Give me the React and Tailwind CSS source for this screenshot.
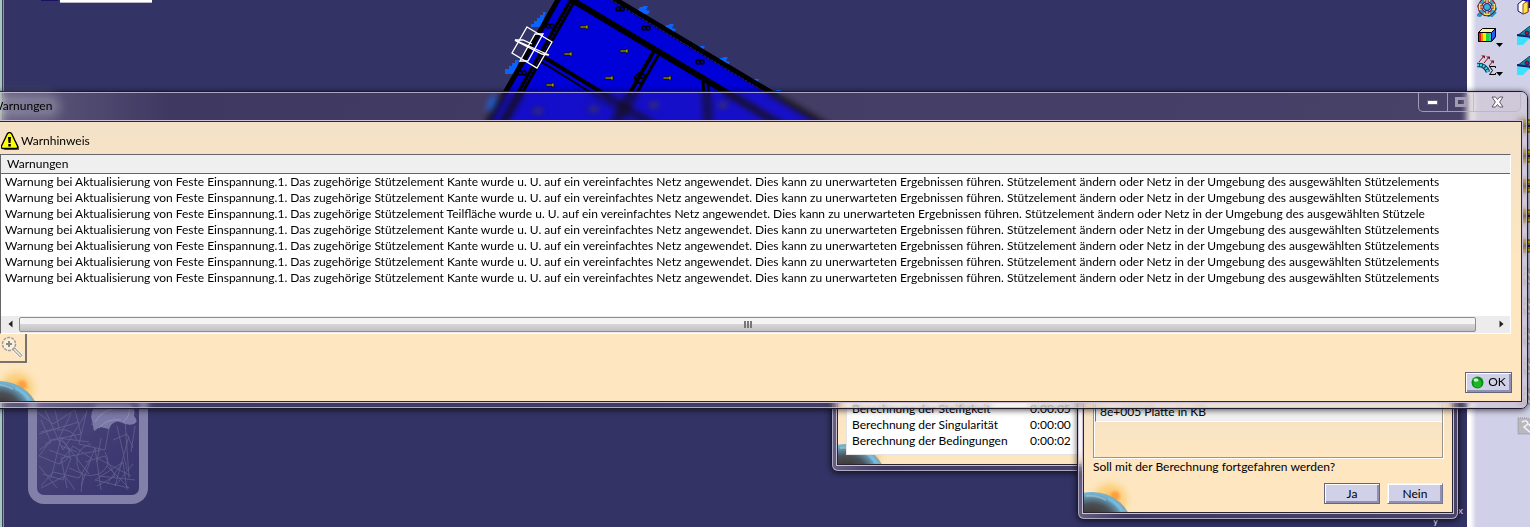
const warningFor = (element, ending) =>
  `Warnung bei Aktualisierung von Feste Einspannung.1. Das zugehörige Stützelement ${element} wurde u. U. auf ein vereinfachtes Netz angewendet. Dies kann zu unerwarteten Ergebnissen führen. Stützelement ändern oder Netz in der Umgebung des ausgewählten ${ending}`;

const warnings = [
  warningFor("Kante", "Stützelements"),
  warningFor("Kante", "Stützelements"),
  warningFor("Teilfläche", "Stützele"),
  warningFor("Kante", "Stützelements"),
  warningFor("Kante", "Stützelements"),
  warningFor("Kante", "Stützelements"),
  warningFor("Kante", "Stützelements"),
];

const steps = [
  { name: "Berechnung der Steifigkeit", time: "0:00:05" },
  { name: "Berechnung der Singularität", time: "0:00:00" },
  { name: "Berechnung der Bedingungen", time: "0:00:02" },
];

const bolts = [[584, 27], [568, 54], [624, 51], [609, 78], [550, 85], [667, 78], [537, 111], [593, 109], [653, 105], [722, 105]];
const holes = [[550, 26], [522, 73], [620, 9], [646, 28], [700, 62]];
const clamps = [[637, 11], [663, 29], [694, 51], [717, 62], [748, 84], [770, 95]];

function Model() {
  return (
    <svg className="absolute left-0 top-0" width="900" height="128" viewBox="0 0 900 128" aria-hidden="true">
      {/* fixtures along the left edge */}
      <g fill="#0a63ff">
        <path d="M546 12h-3v3h-3v3h-3v3h-3v3h-3v3h10z" />
        <path d="M519 60h-4v3h-3v3h-3v3h-4v5h10z" />
        <path d="M497 95h-4v4h-4v5l-3 6h8z" />
      </g>
      {clamps.map(([x, y]) => (
        <path key={x} d={`M${x} ${y}l3-4h3v-1h5l-2 4 4 1-2 3-7 1z`} fill="#0a63ff" />
      ))}
      <path d="M558 0H612L825 128H487Z" fill="#0000d8" />
      <g stroke="#000" fill="none">
        <path d="M559 -2L485 128" strokeWidth="5" />
        <path d="M574 -2L500 128" strokeWidth="7" />
        <path d="M573 0L499 130" stroke="#0c0c90" strokeWidth="1" strokeDasharray="3 1" />
        <path d="M572 0L786 128" strokeWidth="6" />
        <path d="M612 -2L830 128" strokeWidth="6" />
        <path d="M611 0L820 125" stroke="#2020a0" strokeWidth="1" strokeDasharray="3 1" />
        <path d="M542 56L660 128" strokeWidth="4" />
        <path d="M540 61L648 128" strokeWidth="2" />
        <path d="M654 51L612 124" strokeWidth="4" />
        <path d="M659 54L618 126" strokeWidth="3" />
        <path d="M703 81l3 45M708 84l3 40" strokeWidth="3" />
        <circle cx="640" cy="78" r="5" strokeWidth="2" />
        <path d="M634 78h12" strokeWidth="2" />
      </g>
      {holes.map(([x, y]) => (
        <g key={x} fill="#0000a0" stroke="#000" strokeWidth="1.5">
          <circle cx={x - 2} cy={y} r="2" />
          <circle cx={x + 2} cy={y} r="2" />
        </g>
      ))}
      {bolts.map(([x, y]) => (
        <path key={x} d={`M${x - 4} ${y - 1}h6v-1h2v4h-2v-1h-6z`} fill="#a09c00" stroke="#101000" strokeWidth="0.8" />
      ))}
      {/* compass plane */}
      <g stroke="#fff" strokeWidth="1.3" fill="none">
        <path d="M527 27L552 42L537 68L512 53Z" />
        <path d="M515 40L549 55L542 54L516 41Z" />
        <path d="M535 34h8L528 61h-8Z" />
        <path d="M515 40l8 0 9 4" />
      </g>
    </svg>
  );
}

function Planet({ className }) {
  return (
    <svg className={className} width="52" height="40" viewBox="0 0 52 40" aria-hidden="true">
      <defs>
        <radialGradient id="glow" cx="26" cy="28" r="25" gradientUnits="userSpaceOnUse">
          <stop offset="0" stopColor="#fbb84a" />
          <stop offset="0.55" stopColor="#fbcf7c" stopOpacity="0.8" />
          <stop offset="1" stopColor="#fde6c0" stopOpacity="0" />
        </radialGradient>
        <radialGradient id="sun" cx="31" cy="24" r="7" gradientUnits="userSpaceOnUse">
          <stop offset="0.4" stopColor="#ffa040" />
          <stop offset="1" stopColor="#ffb050" stopOpacity="0" />
        </radialGradient>
        <radialGradient id="globe" cx="8" cy="56" r="38" gradientUnits="userSpaceOnUse">
          <stop offset="0.45" stopColor="#423e3e" />
          <stop offset="0.64" stopColor="#4a5258" />
          <stop offset="0.78" stopColor="#5c8298" />
          <stop offset="0.9" stopColor="#6fb4d4" />
          <stop offset="1" stopColor="#86a8b0" />
        </radialGradient>
      </defs>
      <rect width="52" height="40" fill="url(#glow)" />
      <circle cx="31" cy="24" r="7" fill="url(#sun)" />
      <ellipse cx="8" cy="56" rx="40" ry="36" fill="url(#globe)" />
      <path d="M2 24q10-1 20 4" stroke="#c4dce4" strokeWidth="2" opacity="0.4" fill="none" />
      <path d="M24 27q10 5 14 12" stroke="#7cc8ec" strokeWidth="3" opacity="0.5" fill="none" />
    </svg>
  );
}

function GlassWindow({ className, title, controls, children }) {
  return (
    <section className={`absolute rounded-[7px] border border-[#1d1a30] shadow-[0_1px_6px_rgba(0,0,0,0.7)] backdrop-blur-[3px] ${className}`}>
      <div className="rounded-md border border-[#c8c0d8]/80 bg-[rgba(190,110,60,0.09)] bg-linear-to-r from-white/20 via-transparent via-12% to-white/5 px-[3px] pb-1">
        <header className="flex h-[27px] items-start justify-between">
          {title}
          {controls}
        </header>
        <div className="border border-[#c8c0d8]">
          <div className="relative overflow-hidden border border-[#2a2630] bg-linear-to-b from-[#f3e1c8] to-[#fde6c0] to-50%">
            {children}
          </div>
        </div>
      </div>
    </section>
  );
}

function WindowControls() {
  return (
    <div className="mr-[2px] flex h-[19px] rounded-b-[5px] border border-t-0 border-[#b9b2c9]/80">
      <button aria-label="Minimieren" className="flex w-[29px] items-center justify-center border-r border-[#b9b2c9]/80">
        <svg width="12" height="6" viewBox="0 0 12 6"><rect x="0.5" y="1.5" width="10" height="4" fill="#fff" stroke="#66607c" /></svg>
      </button>
      <button aria-label="Maximieren" className="flex w-[26px] items-center justify-center border-r border-[#b9b2c9]/80">
        <svg width="12" height="10" viewBox="0 0 12 10"><path d="M1.5 1.5h9v7h-9z" fill="none" stroke="#a39bb2" strokeWidth="3" /></svg>
      </button>
      <button aria-label="Schließen" className="flex w-[46px] items-center justify-center">
        <svg width="13" height="12" viewBox="0 0 13 12">
          <path d="M1 1h3.500l2 2.500 2-2.500H12L8.600 6 12 11H8.500l-2-2.500-2 2.500H1L4.400 6z" fill="#fff" stroke="#5e5868" />
        </svg>
      </button>
    </div>
  );
}

function PushButton({ children, strong }) {
  const edge = strong ? "border-[#66667a]" : "border-[#f2f2ff] border-b-[#77779a] border-r-[#77779a]";
  return (
    <button className={`h-[21px] w-14 border bg-[#d0d0e8] leading-4 shadow-[inset_1px_1px_0_#fff,inset_-2px_-2px_0_#9090b0] ${edge}`}>
      {children}
    </button>
  );
}

function ToolIcon({ kind }) {
  if (kind === "wheel")
    return (
      <svg width="20" height="20" viewBox="0 0 20 20">
        <path d="M0 19l5-5M2 20l5-5M14 20l5-5M11 20l9-9M0 10l9-9" stroke="#1495c4" strokeWidth="2" />
        <circle cx="10" cy="10" r="7" fill="#c8ecf4" stroke="#8b1010" strokeWidth="4.500" />
        <circle cx="10" cy="10" r="7" fill="none" stroke="#2fa8d0" strokeWidth="2.600" />
        <circle cx="10" cy="10" r="7" fill="none" stroke="#f8e468" strokeWidth="2.600" strokeDasharray="6 5" strokeDashoffset="3" />
        <path d="M10 3v14M3 10h14" stroke="#8b1010" strokeWidth="3" />
        <path d="M10 3v14M3 10h14" stroke="#fff" strokeWidth="1.200" />
        <circle cx="10" cy="10" r="3.500" fill="#35b5dc" stroke="#102080" />
      </svg>
    );
  if (kind === "spectrum")
    return (
      <svg width="20" height="20" viewBox="0 0 20 20">
        <path d="M1.500 6.500l4-4h13v8l-4 5z" fill="#fff3a0" stroke="#000" />
        <path d="M14.500 6.500l4-4v8l-4 5z" fill="#2c5ce8" stroke="#000" />
        <rect x="1" y="6" width="3" height="10" fill="#e81010" />
        <rect x="4" y="6" width="2" height="10" fill="#ff8a00" />
        <rect x="6" y="6" width="3" height="10" fill="#ffee00" />
        <rect x="9" y="6" width="3" height="10" fill="#20d040" />
        <rect x="12" y="6" width="3" height="10" fill="#20c8e8" />
        <path d="M1.500 6.500h13v9h-13z" fill="none" stroke="#000" />
      </svg>
    );
  if (kind === "forces")
    return (
      <svg width="20" height="20" viewBox="0 0 20 20">
        <path d="M0 10q8-1 11 7" fill="none" stroke="#063c60" strokeWidth="4.500" />
        <path d="M0 10q8-1 11 7" fill="none" stroke="#3fd4e4" strokeWidth="2.500" strokeDasharray="2 1" />
        <path d="M2 7l5-6M7 8l5-6M12 11l4-5" fill="none" stroke="#8b1010" strokeWidth="1" />
        <path d="M4 0.500h4v3zM9 1.500h4v3zM13 5.500h4v3z" fill="#8b1010" />
        <path d="M18.500 13v-1.500h-6l3 4-3 4h6V18" fill="none" stroke="#000" strokeWidth="1" />
      </svg>
    );
  if (kind === "box")
    return (
      <svg width="20" height="20" viewBox="0 0 20 20">
        <rect x="5" y="0" width="15" height="12" fill="#0000e0" />
        <path d="M1 8l5-4 5 2v10l-5 2-5-3z" fill="#fff" stroke="#101060" />
        <path d="M6 8l5-3v11l-5 2z" fill="#ffe14a" stroke="#a05a00" />
      </svg>
    );
  if (kind === "surface")
    return (
      <svg width="20" height="20" viewBox="0 0 20 20">
        <path d="M0 10L13 0h7v14z" fill="#0d8f9f" stroke="#0a3a60" />
        <path d="M0 10v9h6l8-8z" fill="#3fe0fb" />
        <path d="M0 9l14 2" stroke="#181870" strokeWidth="2" />
        <circle cx="10" cy="7" r="2" fill="#c01010" stroke="#102080" />
      </svg>
    );
  if (kind === "load")
    return (
      <svg width="20" height="20" viewBox="0 0 20 20">
        <path d="M2 4h18v4H2zM4 12h16v4H4z" fill="#d8b800" stroke="#4a3a00" />
        <path d="M2 10h16" stroke="#202080" strokeWidth="2" />
      </svg>
    );
  return (
    <svg width="20" height="20" viewBox="0 0 20 20">
      <path d="M1 2h10l4 4v12H1z" fill="#b8b8be" stroke="#8c8c94" strokeDasharray="1 1" />
      <path d="M5 6q5-3 6 2l-4 3 7 6M12 8l3 5" stroke="#f4f4fa" strokeWidth="1.500" fill="none" />
    </svg>
  );
}

const leftTools = [
  { kind: "wheel", name: "Eigenschaften" },
  { kind: "spectrum", name: "Spannungen" },
  { kind: "forces", name: "Kräfte" },
];
const rightTools = ["box", "surface", "surface", "blank", "load", "load", "load", "load", "load", "grey", "grey", "grey", "grey", "grey", "grey"];

function Toolbar() {
  return (
    <aside className="relative h-screen w-[63px] shrink-0 overflow-hidden bg-linear-to-r from-white from-5% to-[#d0d0e8] to-15% pl-[10px]">
      <div className="-mt-1 flex gap-5">
        <div className="flex w-5 shrink-0 flex-col gap-2">
          {leftTools.map((tool, i) => (
            <button key={tool.kind} aria-label={tool.name} className="relative block h-[21px]">
              <ToolIcon kind={tool.kind} />
              {i > 0 && (
                <svg className="absolute left-[19px] top-[18px]" width="8" height="5" viewBox="0 0 8 5">
                  <path d="M0 0h7L3.500 4z" fill="#000" />
                </svg>
              )}
            </button>
          ))}
        </div>
        <div className="flex w-5 shrink-0 flex-col gap-[10px]">
          {rightTools.map((kind, i) => (
            <div key={i} className="h-5">{kind !== "blank" && <ToolIcon kind={kind} />}</div>
          ))}
        </div>
      </div>
    </aside>
  );
}

function Sketch() {
  return (
    <div className="absolute left-7 top-[390px] h-[114px] w-[120px] overflow-hidden rounded-b-2xl border-9 border-t-0 border-[#8280a8] bg-linear-to-br from-[#4f4b7e] to-[#37336c]">
      <svg width="102" height="105" viewBox="0 0 102 105" aria-hidden="true">
        <g fill="none" stroke="#8280aa" strokeWidth="0.8" opacity="0.55">
          <path d="M0 22l16 12 22-14 6 24-30 6L2 66l20 8 14-18 18 12-12 20-26-6-12 14M8 20l18 40 24-38M50 20l-8 34 26 6 4-22-18-4" />
          <path d="M2 44l40-12M14 88l10-40 28 36M30 98l-6-30 40-8M44 96l14-38 6 42M54 54q-16 4-14 20t22 10q14-8 6-22" />
          <path d="M88 30l4 58M92 46l-14 50 18-22M70 76l22 22-34-8 28-18M62 86l36 4M80 36l10 44M4 98l24-12 10 14M2 76l18 22" />
          <path d="M8 54q14-10 22 2t-8 18M20 40q16-2 20 10M60 68l34 18M98 36l-4 26M70 94l16-22 4 28M34 24l-12 24 30 4" />
          <path d="M4 30l10 22-12 8M18 20l4 18-18 4M12 60l22 8-8 22-20-6M48 72l20-6 10 20-18 10M32 78l14 6-2 18M64 48l-4 24M76 50l14-6 6 14M40 62l-16-6" />
        </g>
        <path d="M60 14q-8 8-5 17l2 10 6-4 9 2 2-4q5-5 9-3 8 4 14 2 5-3 0-8 2-6-3-12z" fill="#7a78a6" />
        <path d="M58 32q8-14 26-14M62 38q8-10 22-8M86 32q8-6 6-16" stroke="#9a98bc" strokeWidth="0.8" fill="none" />
      </svg>
    </div>
  );
}

function ProgressWindow() {
  return (
    <GlassWindow className="left-[831px] top-[366px] w-[420px]">
      <Planet className="absolute bottom-0 left-0" />
      <div className="relative mb-[9px] ml-2 border border-[#e4e4e4] bg-white pb-[5px] pl-[5px] pt-[3px]">
        <table className="leading-4">
          <tbody>
            {steps.map((step) => (
              <tr key={step.name}>
                <td className="w-[178px] p-0">{step.name}</td>
                <td className="p-0">{step.time}</td>
              </tr>
            ))}
          </tbody>
        </table>
      </div>
    </GlassWindow>
  );
}

function ConfirmWindow() {
  return (
    <GlassWindow className="left-[1077px] top-[366px] w-[382px]">
      <Planet className="absolute bottom-0 left-0" />
      <div className="relative px-[9px] pb-2">
        <div className="h-[61px] border border-[#9a958c] shadow-[1px_1px_0_#fff,inset_1px_1px_0_#fff]">
          <div className="ml-px mt-1.5 h-[18px] border-b border-l border-b-white border-l-[#77726c] bg-[#efefef] pl-1 leading-4">
            8e+005 Platte in KB
          </div>
        </div>
        <p className="mt-px leading-4">Soll mit der Berechnung fortgefahren werden?</p>
        <div className="mt-2 flex justify-end gap-[7px]">
          <PushButton strong>Ja</PushButton>
          <PushButton>Nein</PushButton>
        </div>
      </div>
    </GlassWindow>
  );
}

function WarningWindow() {
  return (
    <GlassWindow
      className="-left-4 right-[2px] top-[91px]"
      title={
        <h1 className="mt-[5px] rounded-full bg-white/20 pl-[2px] pr-1 leading-4 shadow-[0_0_10px_5px_rgba(255,255,255,0.2)]">Warnungen</h1>
      }
      controls={<WindowControls />}
    >
      <Planet className="absolute bottom-0 left-0" />
      <div className="relative pl-[9px] pr-[10px] pt-[10px]">
        <div className="flex h-[18px] items-center gap-[2px] pl-px">
          <svg width="18" height="18" viewBox="0 0 18 18" aria-hidden="true">
            <path d="M10 2l8 13v3H3z" fill="#555" />
            <path d="M6.500 1.500q2-2 4 0l6 12.500q.5 2.500-1.500 2.500H2q-2 0-1.500-2.500z" fill="#ffff00" stroke="#000" strokeWidth="1.300" />
            <path d="M7 5h3l-.5 6h-2z" fill="#000" />
            <rect x="7.300" y="12" width="2.500" height="2.500" fill="#000" />
          </svg>
          <span className="leading-4">Warnhinweis</span>
        </div>

        <div className="mt-1 border border-b-white border-l-[#66666a] border-r-white border-t-[#66666a] bg-white">
          <div className="overflow-hidden">
            <table className="w-full border-collapse whitespace-nowrap leading-4">
              <thead>
                <tr>
                  <th className="h-[18px] border-b border-[#66666a] bg-[#efefef] p-0 pl-1.5 text-left font-normal">Warnungen</th>
                </tr>
              </thead>
              <tbody>
                {warnings.map((text, i) => (
                  <tr key={i}>
                    <td className="p-0 pl-1">{text}</td>
                  </tr>
                ))}
              </tbody>
            </table>
          </div>
          <div className="mt-[30px] flex h-[17px] items-center bg-[#ececec]">
            <button aria-label="Nach links" className="flex w-[18px] justify-center">
              <svg width="5" height="8" viewBox="0 0 5 8"><path d="M4.500 0.500v7L0.500 4z" fill="#222" /></svg>
            </button>
            <div className="mr-4 flex h-[15px] flex-1 items-center justify-center gap-px rounded-[2px] border border-[#8e8e92] bg-linear-to-b from-[#f4f4f4] from-45% via-[#d6d6d8] via-50% to-[#c0c0c2]">
              <span className="h-[7px] w-[2px] bg-[#77777a]" />
              <span className="h-[7px] w-[2px] bg-[#77777a]" />
              <span className="h-[7px] w-[2px] bg-[#77777a]" />
            </div>
            <button aria-label="Nach rechts" className="flex w-[18px] justify-center">
              <svg width="5" height="8" viewBox="0 0 5 8"><path d="M0.500 0.500v7L4.500 4z" fill="#222" /></svg>
            </button>
          </div>
        </div>
      </div>

      <div className="relative flex items-start justify-between pb-2 pl-2 pr-[9px]">
        <button aria-label="Zoom" className="flex h-[29px] w-7 items-center justify-center border-b-2 border-r-2 border-[#77726c]">
          <svg width="22" height="22" viewBox="0 0 22 22" fill="none">
            <path d="M12 12l9 9" stroke="#fff" strokeWidth="5" />
            <path d="M12 12l8.500 8.500" stroke="#a49c90" strokeWidth="3.500" />
            <path d="M13 13l7 7" stroke="#f6ead4" strokeWidth="1.500" />
            <circle cx="8" cy="8" r="6.500" fill="#f8efdf" stroke="#a49c90" strokeWidth="1.500" strokeDasharray="3 1" />
            <path d="M8 5v6M5 8h6" stroke="#8f8980" strokeWidth="2" />
          </svg>
        </button>
        <button className="mt-[38px] flex h-[21px] w-[47px] items-center justify-center gap-1 border border-[#66667a] bg-[#d0d0e8] leading-4 shadow-[inset_1px_1px_0_#fff,inset_-2px_-2px_0_#9090b0]">
          <svg width="13" height="13" viewBox="0 0 13 13" aria-hidden="true">
            <circle cx="6.500" cy="6.500" r="6" fill="#0b8f12" />
            <circle cx="6.500" cy="7.500" r="4" fill="#1fb52a" />
            <ellipse cx="5" cy="4" rx="2.500" ry="1.800" fill="#c9f5c4" />
          </svg>
          OK
        </button>
      </div>
    </GlassWindow>
  );
}

export default function App() {
  return (
    <div className="relative flex min-h-screen overflow-hidden bg-[#333366] font-['Lato','Noto_Sans',sans-serif] text-xs text-black">
      <main className="relative flex-1 border-l-2 border-[#a8c4c8] shadow-[inset_1px_0_0_#3c4450,inset_2px_0_0_#8c9490]">
        <div className="ml-[39px] flex items-start gap-[2px]">
          <div className="h-px w-[17px] bg-[#1c1060]" />
          <div className="h-[3px] w-[92px] border-b border-[#b8b8c8] bg-white" />
        </div>
      </main>
      <Toolbar />
      <Model />
      <Sketch />
      <span className="absolute left-[1458px] top-[504px] text-[10px] text-white">x</span>
      <span className="absolute left-[1433px] top-[512px] text-[10px] leading-4 text-white">y</span>
      <ProgressWindow />
      <ConfirmWindow />
      <WarningWindow />
    </div>
  );
}
